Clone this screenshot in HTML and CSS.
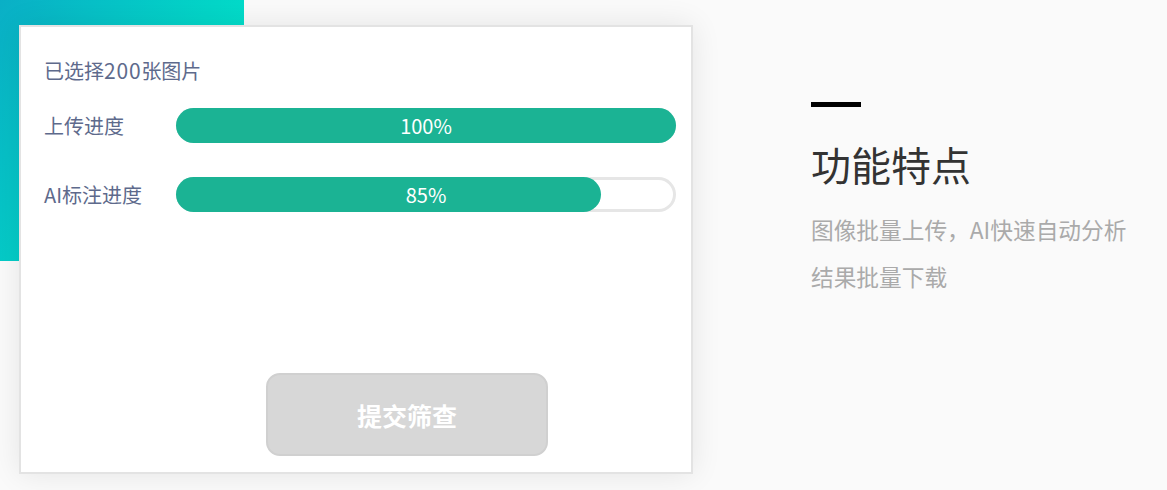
FILE: index.html
```html
<!DOCTYPE html>
<html lang="zh-CN">
<head>
<meta charset="utf-8">
<title>功能特点</title>
<link rel="stylesheet" href="styles.css">
</head>
<body>
<div class="page">
  <div class="deco"></div>
  <div class="card">
    <div class="selected">已选择<span class="num">200</span>张图片</div>
    <div class="rows">
      <div class="row">
        <div class="label">上传进度</div>
        <div class="track">
          <div class="fill" style="width:100%"></div>
          <span class="pct">100%</span>
        </div>
      </div>
      <div class="row">
        <div class="label">AI标注进度</div>
        <div class="track">
          <div class="fill" style="width:85%"></div>
          <span class="pct">85%</span>
        </div>
      </div>
    </div>
    <button class="submit" type="button">提交筛查</button>
  </div>
  <div class="features">
    <div class="bar"></div>
    <h2 class="title">功能特点</h2>
    <p class="desc">图像批量上传，AI快速自动分析</p>
    <p class="desc">结果批量下载</p>
  </div>
</div>
</body>
</html>
```
FILE: styles.css
```css
html, body {
  margin: 0;
  padding: 0;
}
body {
  background: #fafafa;
  font-family: "Noto Sans CJK SC", "Noto Sans", sans-serif;
  width: 1167px;
  height: 490px;
  overflow: hidden;
}
.page {
  position: relative;
  display: flex;
  align-items: flex-start;
  padding: 25px 0 0 19px;
}
.deco {
  position: absolute;
  left: 0;
  top: 0;
  width: 244px;
  height: 261px;
  background: linear-gradient(120deg, #0aafc6 0%, #03d6c8 55%, #00f2d0 100%);
}
.card {
  position: relative;
  z-index: 1;
  box-sizing: border-box;
  width: 674px;
  height: 449px;
  background: #fff;
  border: 2px solid #e3e3e3;
  box-shadow: 0 0 28px rgba(0, 0, 0, 0.09);
  padding: 29px 15px 16px 23px;
  display: flex;
  flex-direction: column;
}
.selected {
  font-size: 20px;
  line-height: 28px;
  color: #5e6a8c;
}
.num {
  font-size: 21px;
  letter-spacing: 0.8px;
}
.rows {
  margin-top: 23px;
  display: flex;
  flex-direction: column;
  gap: 34px;
}
.row {
  display: flex;
  align-items: center;
}
.label {
  width: 132px;
  font-size: 20px;
  color: #5e6a8c;
}
.track {
  position: relative;
  width: 500px;
  height: 35px;
  border-radius: 18px;
  box-shadow: inset 0 0 0 3px #e6e6e6;
  display: flex;
}
.fill {
  height: 100%;
  border-radius: 18px;
  background: #1bb394;
}
.pct {
  position: absolute;
  left: 0;
  right: 0;
  top: 0;
  bottom: 0;
  display: flex;
  align-items: center;
  justify-content: center;
  color: #fff;
  font-size: 20px;
}
.submit {
  margin-top: auto;
  margin-left: 222px;
  box-sizing: border-box;
  width: 282px;
  height: 83px;
  border: 2px solid #d0d0d0;
  border-radius: 14px;
  background: #d7d7d7;
  color: #fff;
  font-family: inherit;
  font-size: 25px;
  font-weight: 700;
  padding: 0;
}
.features {
  margin-left: 118px;
  margin-top: 77px;
}
.bar {
  width: 50px;
  height: 5px;
  background: #000;
}
.title {
  margin: 33px 0 0;
  font-size: 40px;
  line-height: 48px;
  font-weight: 400;
  color: #333;
}
.desc {
  margin: 0;
  font-size: 22.7px;
  line-height: 47px;
  color: #aaa;
}
.title + .desc {
  margin-top: 18px;
}
```
